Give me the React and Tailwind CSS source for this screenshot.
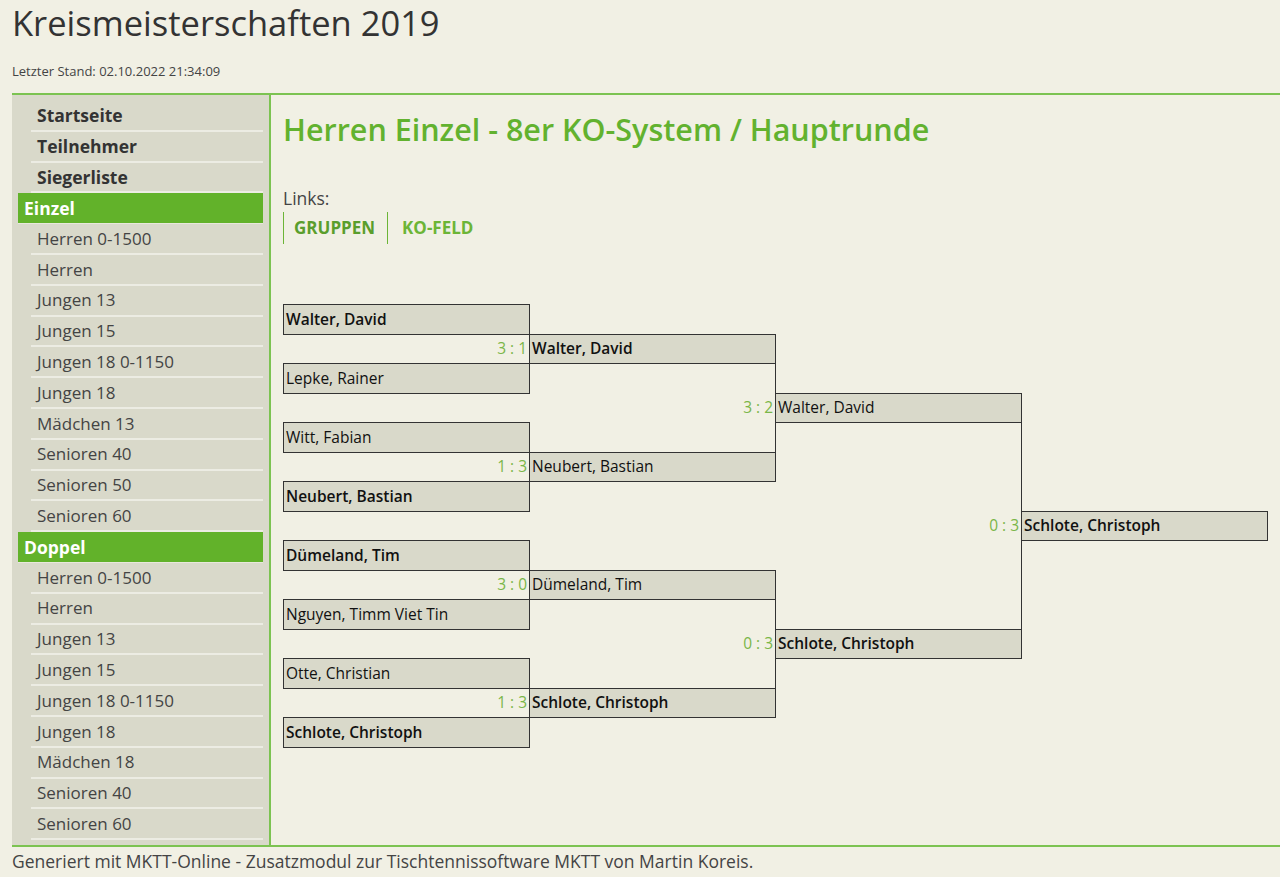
import React from 'react'

const nav = [
  { label: 'Startseite', kind: 'main' },
  { label: 'Teilnehmer', kind: 'main' },
  { label: 'Siegerliste', kind: 'main' },
  { label: 'Einzel', kind: 'head' },
  { label: 'Herren 0-1500' },
  { label: 'Herren' },
  { label: 'Jungen 13' },
  { label: 'Jungen 15' },
  { label: 'Jungen 18 0-1150' },
  { label: 'Jungen 18' },
  { label: 'Mädchen 13' },
  { label: 'Senioren 40' },
  { label: 'Senioren 50' },
  { label: 'Senioren 60' },
  { label: 'Doppel', kind: 'head' },
  { label: 'Herren 0-1500' },
  { label: 'Herren' },
  { label: 'Jungen 13' },
  { label: 'Jungen 15' },
  { label: 'Jungen 18 0-1150' },
  { label: 'Jungen 18' },
  { label: 'Mädchen 18' },
  { label: 'Senioren 40' },
  { label: 'Senioren 60' },
]

// 16 rows x 4 rounds
const box = (name, bold) => ({ t: 'box', name, bold })
const score = (text) => ({ t: 'score', text })
const line = { t: 'line' }

const grid = [
  [box('Walter, David', true), null, null, null],
  [score('3 : 1'), box('Walter, David', true), null, null],
  [box('Lepke, Rainer'), line, null, null],
  [null, score('3 : 2'), box('Walter, David'), null],
  [box('Witt, Fabian'), line, line, null],
  [score('1 : 3'), box('Neubert, Bastian'), line, null],
  [box('Neubert, Bastian', true), null, line, null],
  [null, null, score('0 : 3'), box('Schlote, Christoph', true)],
  [box('Dümeland, Tim', true), null, line, null],
  [score('3 : 0'), box('Dümeland, Tim'), line, null],
  [box('Nguyen, Timm Viet Tin'), line, line, null],
  [null, score('0 : 3'), box('Schlote, Christoph', true), null],
  [box('Otte, Christian'), line, null, null],
  [score('1 : 3'), box('Schlote, Christoph', true), null, null],
  [box('Schlote, Christoph', true), null, null, null],
  [null, null, null, null],
]

const Cell = ({ c }) => {
  if (!c) return <td className="p-0" />
  if (c.t === 'box')
    return (
      <td className={`p-0 pl-[2px] border border-[#333] bg-[#d9d9ca] text-[#111] whitespace-nowrap ${c.bold ? 'font-semibold' : ''}`}>
        {c.name}
      </td>
    )
  if (c.t === 'line') return <td className="p-0 border-r border-[#333]" />
  return <td className="p-0 pr-[2px] text-right text-[#7ab648] border-r border-[#333]">{c.text}</td>
}

const Bracket = () => (
  <table className="border-collapse table-fixed w-[984px] text-[15.5px]">
    <colgroup>
      <col className="w-[246px]" />
      <col className="w-[246px]" />
      <col className="w-[246px]" />
      <col className="w-[246px]" />
    </colgroup>
    <tbody>
      {grid.map((row, i) => (
        <tr key={i} className="h-[29.5px]">
          {row.map((c, j) => (
            <Cell key={j} c={c} />
          ))}
        </tr>
      ))}
    </tbody>
  </table>
)

export default function App() {
  return (
    <div className="min-h-screen bg-[#f1f0e4] text-[#333] font-['Open_Sans',sans-serif]">
      <h1 className="px-3 pt-[1px] text-[34.5px] leading-[44px] font-normal text-[#333]">Kreismeisterschaften 2019</h1>
      <p className="px-3 mt-[18px] text-[13px] leading-[16px] text-[#444]">Letzter Stand: 02.10.2022 21:34:09</p>

      <div className="ml-3 mt-[14px] flex border-t-2 border-b-2 border-[#7cc351]">
        <nav className="w-[259px] shrink-0 bg-[#d9d9ca] border-r-2 border-[#7cc351] pt-[6px] pb-[5px] px-[6px]">
          {nav.map((n, i) =>
            n.kind === 'head' ? (
              <div key={i} className="h-[30.8px] flex items-center pl-[6px] bg-[#62b22a] text-white font-bold text-[17.5px] border-b border-[#e8e8dc]">
                {n.label}
              </div>
            ) : (
              <div
                key={i}
                className={`ml-[13px] h-[30.8px] flex items-center pl-[6px] border-b-2 border-[#ecece3] ${n.kind === 'main' ? 'text-[17.5px] font-bold text-[#333]' : 'text-[17px] text-[#444]'}`}
              >
                {n.label}
              </div>
            )
          )}
        </nav>

        <main className="flex-1 pl-3 pt-[14px]">
          <h2 className="text-[30.5px] leading-[40px] font-semibold text-[#62b22f]">Herren Einzel - 8er KO-System / Hauptrunde</h2>
          <div className="mt-[37px] text-[17.5px] leading-[24px] text-[#444]">Links:</div>
          <div className="mt-[2px] flex h-[32px] items-center text-[17px] font-bold">
            <span className="h-full flex items-center border-l border-[#6cb536] pl-[10px] pr-[12px] text-[#5a9e2c]">GRUPPEN</span>
            <span className="h-full flex items-center border-l border-[#6cb536] pl-[14px] text-[#6cb536]">KO-FELD</span>
          </div>
          <div className="mt-[60px]">
            <Bracket />
          </div>
        </main>
      </div>

      <footer className="px-3 pt-[2px] text-[17.5px] leading-[24px] text-[#444]">
        Generiert mit MKTT-Online - Zusatzmodul zur Tischtennissoftware MKTT von Martin Koreis.
      </footer>
    </div>
  )
}
